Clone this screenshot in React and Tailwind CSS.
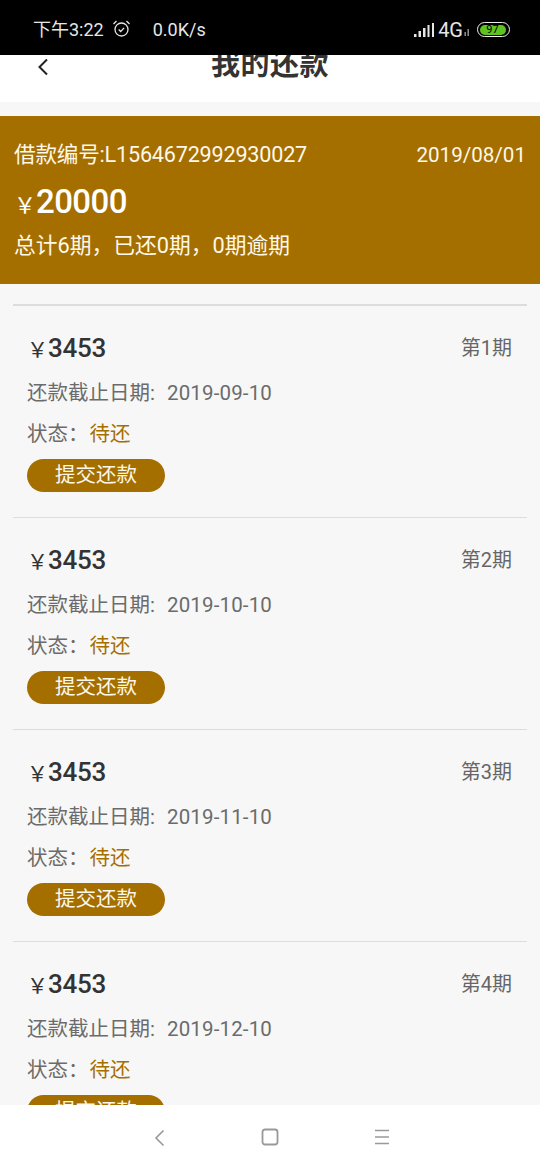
import React from 'react';

const FONT = 'font-["Roboto","Noto_Sans_CJK_SC",sans-serif]';

const plans = [
  { period: '第1期', date: '2019-09-10' },
  { period: '第2期', date: '2019-10-10' },
  { period: '第3期', date: '2019-11-10' },
  { period: '第4期', date: '2019-12-10' },
];

function StatusBar() {
  return (
    <div className="h-[55px] shrink-0 bg-black text-[#e6e6e6] flex items-center pl-[33px] pr-[30px] pt-[4px]">
      <span className="text-[18px] leading-none">下午3:22</span>
      <svg className="ml-[8px] -mt-[2px]" width="19" height="19" viewBox="0 0 19 19" fill="none" stroke="#e6e6e6" strokeWidth="1.3">
        <circle cx="9.5" cy="10.5" r="6.5" />
        <path d="M6.7 10.5l2 2 3.4-3.6" />
        <path d="M1.5 5l3-3M17.5 5l-3-3" />
      </svg>
      <span className="ml-[22px] text-[18px] leading-none">0.0K/s</span>
      <div className="ml-auto flex items-center">
        <svg width="21" height="16" viewBox="0 0 21 16" fill="#e6e6e6">
          <rect x="0" y="12" width="2.5" height="3" />
          <rect x="4.5" y="9" width="2.5" height="6" />
          <rect x="9" y="6" width="2.5" height="9" />
          <rect x="13.5" y="3" width="2" height="12" />
          <rect x="18" y="1" width="2" height="14" />
        </svg>
        <span className="ml-[3px] text-[20px] leading-none">4G</span>
        <svg className="ml-[1px] mt-[6px]" width="6" height="7" viewBox="0 0 6 7" fill="#999">
          <rect x="0.5" y="3" width="1.4" height="4" />
          <rect x="3.5" y="0" width="1.4" height="7" />
        </svg>
        <div className="ml-[7px] w-[33px] h-[15px] rounded-full border-[1.5px] border-[#eeeeee] p-[1.5px] flex">
          <div className="w-[26px] h-full rounded-full bg-[#5fc31f] text-black text-[11px] leading-[9px] text-center">97</div>
        </div>
      </div>
    </div>
  );
}

function Header() {
  return (
    <div className="h-[47px] shrink-0 bg-white relative overflow-hidden flex justify-center">
      <svg className="absolute left-[36px] top-[3px]" width="14" height="18" viewBox="0 0 14 18" fill="none" stroke="#222" strokeWidth="2">
        <path d="M11 1.5L3.5 9l7.5 7.5" />
      </svg>
      <h1 className="text-[29px] leading-[29px] -mt-[4px] font-bold text-[#333] tracking-[0.5px]">我的还款</h1>
    </div>
  );
}

function Banner() {
  return (
    <div className="mt-[14px] h-[168px] shrink-0 bg-[#a56f00] text-[#fdf8ea] px-[14px] pt-[26px]">
      <div className="flex justify-between items-center leading-[26px]">
        <span className="text-[21.6px] tracking-[-0.2px]">借款编号:L1564672992930027</span>
        <span className="text-[20.6px]">2019/08/01</span>
      </div>
      <div className="mt-[14px] flex items-baseline leading-[40px] text-white">
        <span className="text-[22px]">￥</span>
        <span className="text-[33px] font-medium tracking-[-0.6px]">20000</span>
      </div>
      <div className="mt-[7px] text-[21.75px] leading-[26px]">总计6期，已还0期，0期逾期</div>
    </div>
  );
}

function PlanItem({ item }) {
  return (
    <div className="h-[212px] shrink-0 border-b border-[#dddddd] px-[14px] pt-[26px]">
      <div className="flex justify-between items-start">
        <div className="flex items-baseline leading-[32px] text-[#333]">
          <span className="text-[21px]">￥</span>
          <span className="text-[26px] font-medium tracking-[-0.3px]">3453</span>
        </div>
        <span className="text-[20px] leading-[30px] text-[#666] pr-[1px] mt-[1px]">{item.period}</span>
      </div>
      <div className="mt-[14px] text-[20.5px] leading-[26px] text-[#6b6b6b]">
        还款截止日期:<span className="ml-[12px] tracking-[0.15px]">{item.date}</span>
      </div>
      <div className="mt-[15px] text-[20.5px] leading-[26px] text-[#6b6b6b]">
        状态：<span className="ml-[1px] text-[#a56f00]">待还</span>
      </div>
      <button className="mt-[12px] block w-[138px] h-[33px] rounded-full bg-[#a56f00] text-[#fdf8ea] text-[20.5px] leading-[33px] text-center">
        提交还款
      </button>
    </div>
  );
}

function NavBar() {
  return (
    <div className="h-[65px] shrink-0 bg-white flex items-start pt-[23px] text-[#999]">
      <svg className="ml-[153px]" width="14" height="20" viewBox="0 0 14 20" fill="none" stroke="#999" strokeWidth="1.6">
        <path d="M10.5 2.5L3 10l7.5 7.5" />
      </svg>
      <svg className="ml-[94px]" width="18" height="18" viewBox="0 0 18 18" fill="none" stroke="#999" strokeWidth="1.8">
        <rect x="1.5" y="1.5" width="15" height="15" rx="2.5" />
      </svg>
      <svg className="ml-[95px]" width="16" height="18" viewBox="0 0 16 18" fill="none" stroke="#999" strokeWidth="1.5">
        <path d="M1 2.5h14M1 9h14M1 15.5h14" />
      </svg>
    </div>
  );
}

export default function App() {
  return (
    <div className={`${FONT} w-[540px] h-[1170px] overflow-hidden flex flex-col bg-[#f7f7f7]`}>
      <StatusBar />
      <Header />
      <div className="flex-1 min-h-0 overflow-hidden flex flex-col">
        <Banner />
        <div className="mt-[20px] mx-[13px] border-t-2 border-[#dddddd] flex flex-col">
          {plans.map((item) => (
            <PlanItem key={item.period} item={item} />
          ))}
        </div>
      </div>
      <NavBar />
    </div>
  );
}
